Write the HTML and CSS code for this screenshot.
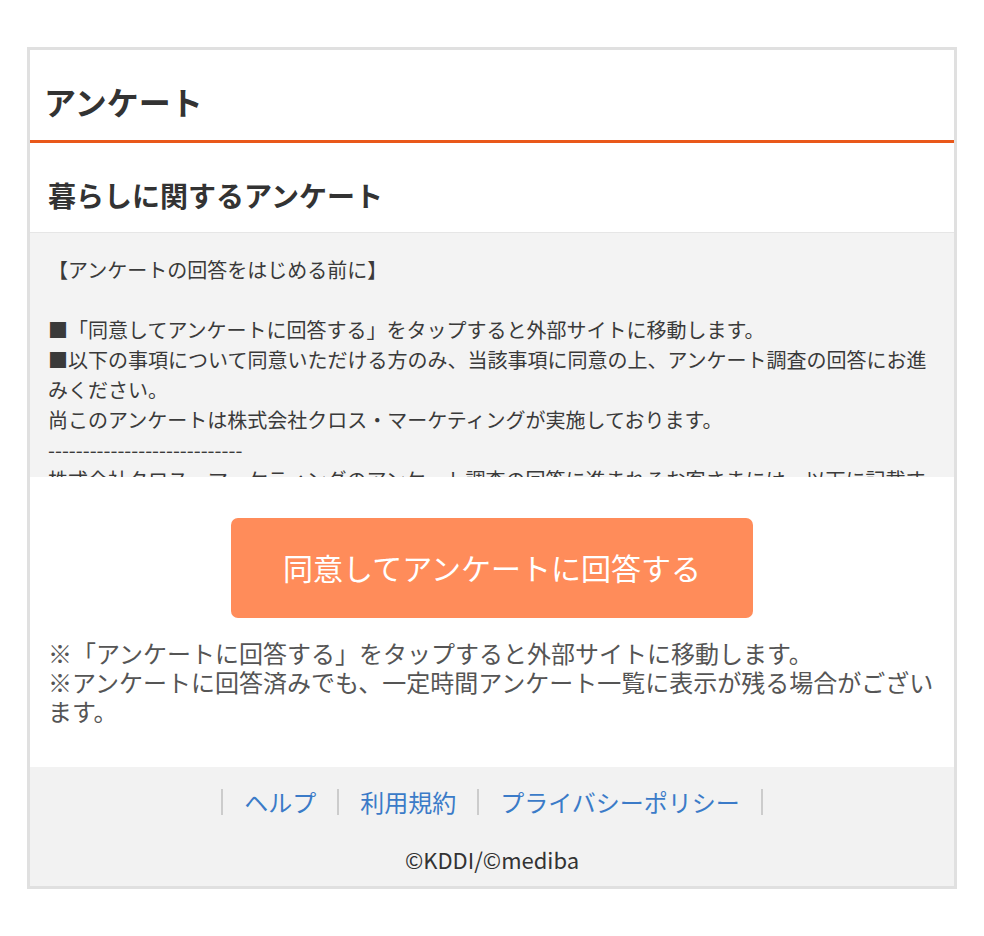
FILE: index.html
```html
<!DOCTYPE html>
<html lang="ja">
<head>
<meta charset="utf-8">
<title>アンケート</title>
<link rel="stylesheet" href="styles.css">
</head>
<body>
<div class="page">
  <header class="page-header">
    <h1 class="page-title">アンケート</h1>
  </header>
  <section class="survey">
    <h2 class="survey-title">暮らしに関するアンケート</h2>
    <div class="terms">
      <p>【アンケートの回答をはじめる前に】</p>
      <p class="blank">&nbsp;</p>
      <p>■「同意してアンケートに回答する」をタップすると外部サイトに移動します。</p>
      <p>■以下の事項について同意いただける方のみ、当該事項に同意の上、アンケート調査の回答にお進みください。</p>
      <p>尚このアンケートは株式会社クロス・マーケティングが実施しております。</p>
      <p>----------------------------</p>
      <p>株式会社クロス・マーケティングのアンケート調査の回答に進まれるお客さまには、以下に記載する事項をご確認いただきます。</p>
    </div>
    <div class="action">
      <a class="agree-btn" href="#">同意してアンケートに回答する</a>
    </div>
    <div class="notes">
      <p>※「アンケートに回答する」をタップすると外部サイトに移動します。</p>
      <p>※アンケートに回答済みでも、一定時間アンケート一覧に表示が残る場合がございます。</p>
    </div>
  </section>
  <footer class="page-footer">
    <ul class="footer-links">
      <li><a href="#">ヘルプ</a></li>
      <li><a href="#">利用規約</a></li>
      <li><a href="#">プライバシーポリシー</a></li>
    </ul>
    <p class="copyright">©KDDI/©mediba</p>
  </footer>
</div>
</body>
</html>
```

FILE: styles.css
```css
* {
  box-sizing: border-box;
}

html, body {
  margin: 0;
  padding: 0;
  background: #ffffff;
}

body {
  font-family: "Noto Sans CJK JP", "Noto Sans", sans-serif;
  color: #333333;
  padding: 47px 27px 0 27px;
}

.page {
  width: 930px;
  border: 3px solid #e0e0e0;
  background: #ffffff;
}

.page-header {
  height: 93px;
  border-bottom: 3px solid #e9581a;
  display: flex;
  align-items: center;
  padding: 12px 14px 0 14px;
}

.page-title {
  margin: 0;
  font-size: 32px;
  font-weight: 700;
  line-height: 1;
  color: #333333;
}

.survey-title {
  margin: 0;
  height: 90px;
  display: flex;
  align-items: center;
  padding: 14px 18px 0 18px;
  font-size: 28px;
  font-weight: 700;
  color: #333333;
  border-bottom: 1px solid #e6e6e6;
}

.terms {
  height: 244px;
  overflow: hidden;
  background: #f3f3f3;
  padding: 22px 18px 0 18px;
  font-size: 20px;
  line-height: 30px;
  color: #3a3a3a;
}

.terms p {
  margin: 0;
}

.action {
  display: flex;
  justify-content: center;
  padding: 41px 0 0 0;
}

.agree-btn {
  width: 522px;
  height: 100px;
  border-radius: 7px;
  background: #ff8c5a;
  color: #ffffff;
  font-size: 30px;
  font-weight: 400;
  text-decoration: none;
  display: flex;
  align-items: center;
  justify-content: center;
  padding-bottom: 2px;
}

.notes {
  padding: 20px 18px 42px 18px;
  font-size: 24px;
  line-height: 29px;
  color: #555555;
}

.notes p {
  margin: 0;
}

.page-footer {
  background: #f2f2f2;
  height: 119px;
  padding-top: 22px;
  text-align: center;
}

.footer-links {
  list-style: none;
  margin: 0;
  padding: 0;
  display: flex;
  justify-content: center;
  font-size: 24px;
  line-height: 26px;
}

.footer-links li {
  border-left: 2px solid #cccccc;
  padding: 0 21px;
}

.footer-links li:last-child {
  border-right: 2px solid #cccccc;
}

.footer-links a {
  color: #3b7bc8;
  text-decoration: none;
}

.copyright {
  margin: 31px 0 0 0;
  font-size: 22px;
  line-height: 26px;
  color: #333333;
}
```
